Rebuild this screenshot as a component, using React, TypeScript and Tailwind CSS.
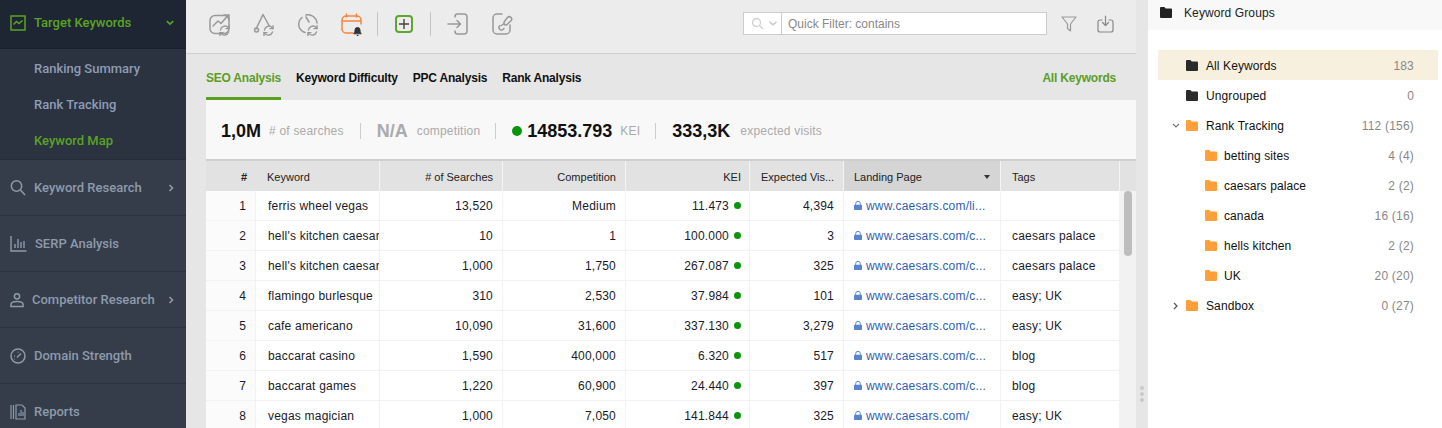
import React from "react";

const F = ({ c, s = 12 }: { c: string; s?: number }) => (
  <svg width={s} height={s - 1} viewBox="0 0 12 11" className="shrink-0">
    <path d="M0 1a1 1 0 0 1 1-1h3.4l1.3 1.6H11a1 1 0 0 1 1 1V10a1 1 0 0 1-1 1H1a1 1 0 0 1-1-1z" fill={c} />
  </svg>
);

const Ico = ({ children, w = 24, h = 24 }: { children: React.ReactNode; w?: number; h?: number }) => (
  <svg width={w} height={h} viewBox="0 0 24 24" fill="none" stroke="#999" strokeWidth="1.5" strokeLinecap="round" strokeLinejoin="round" className="shrink-0">
    {children}
  </svg>
);

const Refresh = () => (
  <g stroke="#999" strokeWidth="1.4">
    <path d="M12.5 18a4.5 4.5 0 0 1 7.6-2.6l1 1" />
    <path d="M21 13.6v3h-3" />
    <path d="M20.5 20a4.5 4.5 0 0 1-7.6 1.6l-.9-1" />
    <path d="M12 24v-3.4h3" />
  </g>
);

const Side = ({ icon, label, arrow }: { icon: React.ReactNode; label: string; arrow?: boolean }) => (
  <div className="h-14 flex items-center pl-[10px] pr-[12px] border-b border-[#2c3340] text-[#8d9aac] font-[Roboto,sans-serif] font-medium text-[13px]">
    <span className="shrink-0 flex items-center">{icon}</span>
    <span className="ml-2 flex-1 whitespace-nowrap">{label}</span>
    {arrow && (
      <svg width="6" height="8" viewBox="0 0 6 8" fill="none" stroke="#8d9aac" strokeWidth="1.6"><path d="M1.5 1l3 3-3 3" /></svg>
    )}
  </div>
);

const rows = [
  ["1", "ferris wheel vegas", "13,520", "Medium", "11.473", "4,394", "www.caesars.com/li...", ""],
  ["2", "hell's kitchen caesars", "10", "1", "100.000", "3", "www.caesars.com/c...", "caesars palace"],
  ["3", "hell's kitchen caesars", "1,000", "1,750", "267.087", "325", "www.caesars.com/c...", "caesars palace"],
  ["4", "flamingo burlesque", "310", "2,530", "37.984", "101", "www.caesars.com/c...", "easy; UK"],
  ["5", "cafe americano", "10,090", "31,600", "337.130", "3,279", "www.caesars.com/c...", "easy; UK"],
  ["6", "baccarat casino", "1,590", "400,000", "6.320", "517", "www.caesars.com/c...", "blog"],
  ["7", "baccarat games", "1,220", "60,900", "24.440", "397", "www.caesars.com/c...", "blog"],
  ["8", "vegas magician", "1,000", "7,050", "141.844", "325", "www.caesars.com/", "easy; UK"],
];

const cols = "grid grid-cols-[50px_124px_123px_123px_124px_94px_157px_119px_16px]";
const hc = "h-full flex items-center pt-[2px] border-r border-[#f4f4f4]";
const bc = "h-full flex items-center border-r border-[#f2f2f2] overflow-hidden whitespace-nowrap";

const Group = ({ name, count, color, child, arrow, active }: { name: string; count: string; color: string; child?: boolean; arrow?: "d" | "r"; active?: boolean }) => (
  <div className={`h-[30px] flex items-center pt-[1px] pr-[24px] ${active ? "bg-[#f7f0df]" : ""}`}>
    <span className={`${child ? "w-[47px]" : "w-[28px]"} flex justify-center shrink-0 pl-[12px] pr-[4px]`}>
      {arrow === "d" && <svg width="8" height="6" viewBox="0 0 8 6" fill="none" stroke="#777" strokeWidth="1.2"><path d="M1 1l3 3 3-3" /></svg>}
      {arrow === "r" && <svg width="6" height="8" viewBox="0 0 6 8" fill="none" stroke="#555" strokeWidth="1.2"><path d="M1 1l3 3-3 3" /></svg>}
    </span>
    <F c={color} />
    <span className={`${child ? "ml-[7px]" : "ml-[8px]"} flex-1 text-[#111] tracking-[0.1px]`}>{name}</span>
    <span className="text-[#888] tracking-[0.2px]">{count}</span>
  </div>
);

export default function App() {
  return (
    <div className="w-[1442px] h-[428px] overflow-hidden flex bg-white font-['Liberation_Sans',Arial,sans-serif] text-[12px]">
      {/* sidebar */}
      <aside className="w-[186px] shrink-0 bg-[#353d4a] overflow-hidden">
        <div className="h-[49px] bg-[#1f2633] flex items-center pl-[10px] pr-[12px] pb-[3px] text-[#5aa326] font-[Roboto,sans-serif] font-medium text-[13px] border-b border-[#1a202b]">
          <svg width="16" height="16" viewBox="0 0 16 16" fill="none" stroke="#5aa326" strokeWidth="1.5">
            <rect x="1" y="1" width="14" height="14" />
            <path d="M3.5 9.5l3-3 2.5 2 3.5-3" />
          </svg>
          <span className="ml-2 flex-1">Target Keywords</span>
          <svg width="8" height="6" viewBox="0 0 8 6" fill="none" stroke="#5aa326" strokeWidth="1.7"><path d="M.8 1.2L4 4.2l3.2-3" /></svg>
        </div>
        <div className="h-[111px] bg-[#2b3240] pl-[34px] pt-[2px] flex flex-col font-[Roboto,sans-serif] font-medium text-[13px] text-[#8e9db4] border-b border-[#262c38]">
          <div className="h-9 flex items-center">Ranking Summary</div>
          <div className="h-9 flex items-center">Rank Tracking</div>
          <div className="h-9 flex items-center text-[#5aa326]">Keyword Map</div>
        </div>
        <Side label="Keyword Research" arrow icon={
          <svg width="16" height="18" viewBox="0 0 16 18" fill="none" stroke="#8d9aac" strokeWidth="1.5"><circle cx="6.5" cy="7" r="5.2" /><path d="M10.5 11l4.5 5" /></svg>
        } />
        <Side label="SERP Analysis" icon={
          <svg width="17" height="16" viewBox="0 0 17 16" fill="none" stroke="#8d9aac" strokeWidth="1.4"><path d="M1 0v15h15.5" /><path d="M5 12V8M8 12V3M11 12V6M14 12V5" /></svg>
        } />
        <Side label="Competitor Research" arrow icon={
          <svg width="14" height="16" viewBox="0 0 15 16" fill="none" stroke="#8d9aac" strokeWidth="1.6"><circle cx="7.5" cy="4" r="2.8" /><path d="M1 15v-2.5c0-2 2-3 6.500-3s6.500 1 6.500 3V15z" /></svg>
        } />
        <Side label="Domain Strength" icon={
          <svg width="16" height="16" viewBox="0 0 16 16" fill="none" stroke="#8d9aac" strokeWidth="1.5"><circle cx="8" cy="8" r="7" /><path d="M7 9.500l4-4M4 8h.8M8 3.800v.8M4.500 11h.5" /></svg>
        } />
        <Side label="Reports" icon={
          <svg width="16" height="16" viewBox="0 0 16 16" fill="none" stroke="#8d9aac" strokeWidth="1.2"><path d="M1 1v14M3.500 1v14" /><path d="M6 1h6l3 3v11H6z" /><path d="M9 12V9M11 12V6M13 12V8" /></svg>
        } />
      </aside>

      {/* main */}
      <main className="w-[950px] shrink-0 bg-[#e6e6e6] flex flex-col overflow-hidden">
        <div className="h-[54px] shrink-0 bg-[#ececec] border-b border-[#cfcfcf] flex items-center pl-[22px] pr-[22px] pb-[6px]">
          <Ico><rect x="2" y="3.500" width="19" height="18" rx="5" /><path d="M5 14l5-5 3 2.500 7-8M16 3h5v5" /><Refresh /></Ico>
          <span className="ml-[20px]"><Ico><path d="M11 2.500L4 17M11 2.500l6 11M11 2.500L8 9" /><circle cx="4.500" cy="18" r="2" /><Refresh /></Ico></span>
          <span className="ml-[20px]"><Ico><path d="M6 5.500a9 9 0 0 0-3 9 9 9 0 0 0 6 6M10 3a9 9 0 0 1 11 8M10 5l3 5" /><Refresh /></Ico></span>
          <span className="ml-[20px]">
            <svg width="24" height="24" viewBox="0 0 24 24" fill="none" stroke="#f5863b" strokeWidth="1.5" strokeLinecap="round">
              <path d="M13 21H6a4 4 0 0 1-4-4V8a4 4 0 0 1 4-4h11a4 4 0 0 1 4 4v4M2 9h19M6.500 2v3M16.500 2v3" />
              <path d="M14 21.500c1-1 1-2 1-3.500a2.500 2.500 0 0 1 5 0c0 1.500 0 2.500 1 3.500z" fill="#333" stroke="#333" strokeWidth="1" />
              <path d="M17.500 23.500h.2" stroke="#333" />
            </svg>
          </span>
          <span className="ml-[13px] w-px h-[24px] bg-[#c4c4c4]" />
          <span className="ml-[17px] w-[18px] h-[18px] rounded-[4px] border-2 border-[#5fa52f] flex items-center justify-center">
            <svg width="10" height="10" viewBox="0 0 10 10" stroke="#444" strokeWidth="1.4"><path d="M5 0v10M0 5h10" /></svg>
          </span>
          <span className="ml-[17px] w-px h-[24px] bg-[#c4c4c4]" />
          <span className="ml-[16px]"><Ico><path d="M8 5V4.500A2.500 2.500 0 0 1 10.500 2H17a3 3 0 0 1 3 3v14a3 3 0 0 1-3 3h-6.500A2.500 2.500 0 0 1 8 19.500V19M1 12h12M10 8.500l3.500 3.500-3.500 3.500" /></Ico></span>
          <span className="ml-[19px]"><Ico><path d="M12 2H7a4 4 0 0 0-4 4v12a4 4 0 0 0 4 4h9a4 4 0 0 0 4-4v-5" /><path d="M10 13.500l-.5.500a2.500 2.500 0 0 0 3.500 3.500l1-1M14 10l3.500-4.500a2.400 2.400 0 0 1 3.500 3.300l-4 3.700a2.500 2.500 0 0 1-3-.300" /><path d="M11.500 13.500l3-2.500" /></Ico></span>

          <div className="ml-auto flex items-center">
            <div className="w-[304px] h-[23px] bg-white border border-[#ccc] flex items-center">
              <div className="w-[38px] h-full border-r border-[#ccc] flex items-center pl-[7px] gap-[5px]">
                <svg width="13" height="13" viewBox="0 0 13 13" fill="none" stroke="#d0d0d0" strokeWidth="1.3"><circle cx="5.500" cy="5.500" r="4" /><path d="M8.500 8.500l3.500 3.500" /></svg>
                <svg width="8" height="5" viewBox="0 0 8 5" fill="none" stroke="#c8c8c8" strokeWidth="1.5"><path d="M.5.700L4 3.800 7.500.7" /></svg>
              </div>
              <span className="ml-[6px] text-[#888]">Quick Filter: contains</span>
            </div>
            <span className="ml-[14px] flex"><svg width="16" height="16" viewBox="0 0 16 16" fill="none" stroke="#999" strokeWidth="1.2" strokeLinejoin="round"><path d="M1 1h14L9.500 8v7L6.500 12.500V8z" /></svg></span>
            <span className="ml-[20px] flex"><svg width="17" height="18" viewBox="0 0 17 18" fill="none" stroke="#888" strokeWidth="1.2" strokeLinecap="round" strokeLinejoin="round"><path d="M5 5H3a2 2 0 0 0-2 2v8a2 2 0 0 0 2 2h11a2 2 0 0 0 2-2V7a2 2 0 0 0-2-2h-2M8.500 1v9M5.500 7.500l3 3 3-3" /></svg></span>
          </div>
        </div>

        {/* tabs */}
        <div className="h-[46px] shrink-0 pl-[20px] pr-[20px] flex items-stretch font-bold text-[12px] tracking-[-0.2px] whitespace-nowrap">
          <div className="w-[75px] flex items-center justify-center pt-[5px] border-b-[3px] border-[#5a9e24] text-[#5a9e24] mr-[15px]">SEO Analysis</div>
          <div className="flex items-center text-[#111] pt-[2px] mr-[15px]">Keyword Difficulty</div>
          <div className="flex items-center text-[#111] pt-[2px] mr-[15px]">PPC Analysis</div>
          <div className="flex items-center text-[#111] pt-[2px]">Rank Analysis</div>
          <div className="ml-auto flex items-center pt-[2px] text-[#5a9e24]">All Keywords</div>
        </div>

        <div className="ml-[20px] flex-1 flex flex-col min-h-0">
          {/* stats */}
          <div className="h-[59px] shrink-0 bg-[#f8f8f8] flex items-center pl-[15px] pt-[3px] text-[#aaa] tracking-[0.2px]">
            <b className="text-[18px] text-[#111] tracking-normal">1,0M</b>
            <span className="ml-[8px]">
              # of searches
            </span>
            <span className="ml-[16px] w-px h-[16px] bg-[#ccc]" />
            <b className="ml-[16px] text-[18px] text-[#aaa] tracking-normal">N/A</b>
            <span className="ml-[9px]">competition</span>
            <span className="ml-[15px] w-px h-[16px] bg-[#ccc]" />
            <span className="ml-[16px] w-[10px] h-[10px] rounded-full bg-[#0c950c]" />
            <b className="ml-[5px] text-[18px] text-[#111] tracking-normal">14853.793</b>
            <span className="ml-[8px]">KEI</span>
            <span className="ml-[15px] w-px h-[16px] bg-[#ccc]" />
            <b className="ml-[16px] text-[18px] text-[#111] tracking-normal">333,3K</b>
            <span className="ml-[10px]">expected visits</span>
          </div>

          {/* table */}
          <div className="relative flex-1 overflow-hidden bg-white">
            <div className={`${cols} h-[32px] bg-[#e2e2e2] border-t-2 border-[#cfcfcf] text-[#222] text-[11px]`}>
              <div className={`${hc} justify-end pr-[9px] !border-r-0 font-bold`}>#</div>
              <div className={`${hc} pl-[11px]`}>Keyword</div>
              <div className={`${hc} justify-end pr-[9px]`}>&#35; of Searches</div>
              <div className={`${hc} justify-end pr-[9px]`}>Competition</div>
              <div className={`${hc} justify-end pr-[8px]`}>KEI</div>
              <div className={`${hc} pl-[11px]`}>Expected Vis...</div>
              <div className={`${hc} pl-[10px] bg-[#d5d5d5] justify-between pr-[10px]`}>
                <span>Landing Page</span>
                <span className="w-0 h-0 border-l-[3.500px] border-r-[3.500px] border-t-[4px] border-l-transparent border-r-transparent border-t-[#333]" />
              </div>
              <div className={`${hc} pl-[11px]`}>Tags</div>
              <div />
            </div>
            {rows.map((r) => (
              <div key={r[0]} className={`${cols} h-[30px] border-b border-[#f2f2f2] text-[#1a1a2a] tracking-[0.2px]`}>
                <div className={`${bc} justify-end pr-[9px] bg-[#fbfbfb]`}>{r[0]}</div>
                <div className={`${bc} pl-[12px]`}>{r[1]}</div>
                <div className={`${bc} justify-end pr-[9px]`}>{r[2]}</div>
                <div className={`${bc} justify-end pr-[9px]`}>{r[3]}</div>
                <div className={`${bc} justify-end pr-[8px]`}>
                  {r[4]}
                  <span className="ml-[5px] w-[7px] h-[7px] rounded-full bg-[#0c950c]" />
                </div>
                <div className={`${bc} justify-end pr-[9px]`}>{r[5]}</div>
                <div className={`${bc} pl-[10px] text-[#2f5fb0]`}>
                  <svg width="8" height="9" viewBox="0 0 8 9" className="mr-[4px] shrink-0"><path d="M1.700 4V2.600a2.300 2.300 0 0 1 4.600 0V4" fill="none" stroke="#5b84cf" strokeWidth="1" /><rect y="3.800" width="8" height="5.200" rx=".8" fill="#5b84cf" /></svg>
                  {r[6]}
                </div>
                <div className={`${bc} pl-[11px]`}>{r[7]}</div>
                <div className="bg-[#f2f2f2]" />
              </div>
            ))}
            <div className="absolute right-[4px] top-[32px] w-[8px] h-[65px] rounded-full bg-[#bdbdbd]" />
          </div>
        </div>
      </main>

      {/* gutter */}
      <div className="w-[12px] shrink-0 bg-[#e6e6e6] flex flex-col items-center justify-end pb-[26px] gap-[2px]">
        <span className="w-[4px] h-[4px] rounded-full bg-[#c9c9c9]" />
        <span className="w-[4px] h-[4px] rounded-full bg-[#c9c9c9]" />
        <span className="w-[4px] h-[4px] rounded-full bg-[#c9c9c9]" />
      </div>

      {/* right */}
      <aside className="flex-1 bg-white overflow-hidden">
        <div className="h-[30px] bg-[#f8f8f8] flex items-center pl-[12px] pb-[5px] text-[#222] tracking-[0.1px]">
          <F c="#222" />
          <span className="ml-[12px]">Keyword Groups</span>
        </div>
        <div className="mt-[20px] ml-[10px] mr-[4px]">
          <Group name="All Keywords" count="183" color="#2a2a2a" active />
          <Group name="Ungrouped" count="0" color="#2a2a2a" />
          <Group name="Rank Tracking" count="112 (156)" color="#ff9f3a" arrow="d" />
          <Group name="betting sites" count="4 (4)" color="#ff9f3a" child />
          <Group name="caesars palace" count="2 (2)" color="#ff9f3a" child />
          <Group name="canada" count="16 (16)" color="#ff9f3a" child />
          <Group name="hells kitchen" count="2 (2)" color="#ff9f3a" child />
          <Group name="UK" count="20 (20)" color="#ff9f3a" child />
          <Group name="Sandbox" count="0 (27)" color="#ff9f3a" arrow="r" />
        </div>
      </aside>
    </div>
  );
}
